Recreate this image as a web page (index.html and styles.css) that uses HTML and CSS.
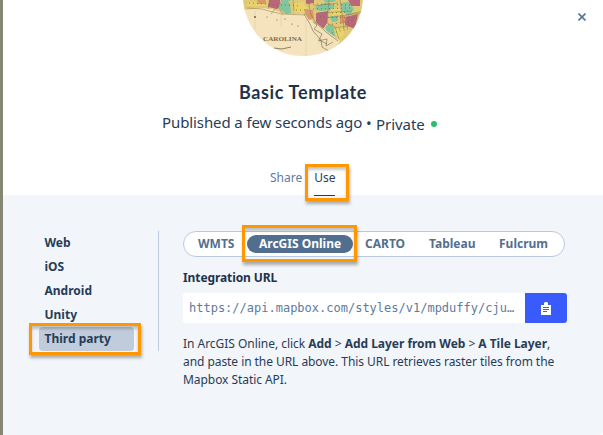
FILE: index.html
```html
<!DOCTYPE html>
<html lang="en">
<head>
<meta charset="utf-8">
<title>Basic Template</title>
<link rel="stylesheet" href="styles.css">
</head>
<body>
<main class="modal">
  <header class="top">
    <svg class="map" viewBox="0 0 120 56" width="120" height="56">
      <defs><clipPath id="disc"><circle cx="60" cy="-4" r="60"/></clipPath></defs>
      <g clip-path="url(#disc)">
        <path fill="#f4e3bd" d="M0 0h120v56H0z"/>
        <path fill="#dfc978" d="M0 0h120v46H96L76 27 61 14 42 14 29 9 20 8 0 10z"/>
        <path fill="#b8687b" d="M26 0l11 0 1 6-4 3-9-2zM73 13l12-2-1 12-4 6-7-7zM102 17l13-3-3 15-10-4zM63 0h8l0 3-8 1zM105 0h12v6l-9 0z"/>
        <path fill="#80c59f" d="M36 5l5-4 6 2 1 10-5 1-6-5zM74 6l10-4 8 4-3 4-12 1-5-2zM83 26l6-1 4 7 2 5-7-2-5-3zM98 3l7-1 6 7-5 7-7-5zM87 16l8-1 0 6-6 1zM38 0h10l-3 2-7 0zM80 0h13l-2 2-8 0z"/>
        <path fill="#ebd26b" d="M51 4l9-2 4 8-6 4-7-2zM88 9l9 0 2 6-10 1zM91 29l9-2 1 7-5 5-4-4zM5 2h18l1 4H4z"/>
        <path fill="#d99868" d="M62 9l8 1 1 8-5 2-4-6zM97 15l6 1-1 7-5 1zM14 0h9v4h-8z"/>
        <path fill="#f2e1ba" d="M73 23l24 18-8 12-13-4-6-15z"/>
        <path fill="none" stroke="#76694c" stroke-width=".6" d="M61 14l6 10 3 7 8 9 1 7 7 4M70 22l4 3-3 4 8 5-3 6 8 4M73 23l10 9 12 9M75 41l9-2-1 7 7-4"/>
        <path fill="none" stroke="#8b7848" stroke-width=".5" d="M4 8l15 1 7 2 13 3 23 1M65 0l3 15 5 8M50 0l1 11M71 6l24-3M86 0l-2 23 8 4 4 12M97 0l4 28M103 15l17-4M84 18l34-5M91 28l20-3M75 13l34-2M27 0l-2 9M33 8l-5 6M36 8l4 7"/>
        <path fill="none" stroke="#77643e" stroke-width=".8" stroke-dasharray="1 3" d="M66 4l42 1M70 9l37-1M77 17l38 1M85 25l27-5M89 33l16-4M6 3l51 3M53 10h10M89 13l15-1M96 29l10-2"/>
        <path fill="none" stroke="#ddd0aa" stroke-width=".6" d="M12 10v20M38 14v13M63 15v41"/>
        <path fill="none" stroke="#665437" stroke-width=".7" d="M31 48l8 1 9-2"/>
        <g fill="#705b3b"><circle cx="12" cy="17" r="1"/><circle cx="24" cy="17" r=".6"/><circle cx="34" cy="20" r=".6"/><circle cx="42" cy="19" r=".6"/><circle cx="49" cy="24" r=".6"/><circle cx="55" cy="26" r=".6"/></g>
        <text x="20" y="41" class="map-label" textLength="39" lengthAdjust="spacingAndGlyphs">CAROLINA</text>
      </g>
    </svg>
    <svg class="close" viewBox="0 0 8 8" width="8" height="8"><path d="M.5.5l7 7M7.5.5l-7 7"/></svg>
    <h1>Basic Template</h1>
    <p class="status"><span class="published">Published a few seconds ago</span><span class="bullet">•</span><span class="private">Private</span><i class="dot"></i></p>
    <nav class="views"><a>Share</a><a class="current">Use<span class="mark mark-use"></span></a></nav>
  </header>
  <section class="panel">
    <nav class="platforms">
      <a>Web</a><a>iOS</a><a>Android</a><a>Unity</a>
      <a class="selected">Third party<span class="mark mark-party"></span></a>
    </nav>
    <div class="content">
      <div class="tabs">
        <a class="wmts">WMTS</a><a class="arcgis">ArcGIS Online<span class="mark mark-arcgis"></span></a><a class="carto">CARTO</a><a class="tableau">Tableau</a><a class="fulcrum">Fulcrum</a>
      </div>
      <h2>Integration URL</h2>
      <div class="url">
        <div class="value">https://api.mapbox.com/styles/v1/mpduffy/cju…</div>
        <button aria-label="Copy"><svg viewBox="0 0 10 13" width="10" height="13"><path fill="#fff" d="M0 3h3V1l1-1h2l1 1v2h3v10H0z"/><path class="lines" d="M2 5.5h6M2 7.5h6M2 9.5h4"/></svg></button>
      </div>
      <p class="help"><span class="line-a">In ArcGIS Online, click <b>Add</b> &gt; <b>Add Layer from Web</b> &gt; <b>A Tile Layer</b>,</span><br><span class="line-b">and paste in the URL above. This URL retrieves raster tiles from the</span><br><span class="line-b">Mapbox Static API.</span></p>
    </div>
  </section>
</main>
</body>
</html>
```

FILE: styles.css
```css
* { box-sizing: border-box; }
body { margin: 0; font-family: "Noto Sans", sans-serif; font-size: 12px; color: #273d56; overflow: hidden; }
.modal { height: 435px; border-left: 3px solid #858674; background: #f2f5fa; border-bottom-right-radius: 3px; }
.top { position: relative; height: 195px; background: #fff; display: flex; flex-direction: column; align-items: center; }
.map { display: block; flex: none; }
.map-label { font: bold 6.5px "Liberation Serif", serif; fill: #7d6b4a; }
.close { position: absolute; right: 17px; top: 13px; }
.close path { stroke: #56739a; stroke-width: 1.6; fill: none; }
h1 { margin: 24px 0 0; font: bold 18px/24px Lato, sans-serif; letter-spacing: .65px; color: #1f334a; }
.status { display: flex; align-items: center; margin: 6px 0 0; height: 24px; font-size: 15px; line-height: 24px; white-space: nowrap; width: 282px; }
.published { width: 201px; letter-spacing: -.1px; }
.bullet { width: 13px; padding-left: 3px; padding-top: 2px; }
.private { width: 54px; padding-top: 3px; letter-spacing: -.05px; }
.dot { width: 6px; height: 6px; border-radius: 50%; background: #2dbe6c; margin: 3px 0 0 1px; }
.views { display: flex; gap: 12px; margin-top: 34px; width: 66px; line-height: 20px; }
.views a { color: #607b9c; }
.views .current { position: relative; width: 21px; height: 28px; color: #273d56; border-bottom: 1px solid #273d56; }
.mark { position: absolute; border: 3px solid #ff9800; box-shadow: 1px 3px 3px rgba(0,0,0,.3), inset 0 3px 3px rgba(0,0,0,.22); z-index: 2; }
.mark-use { left: -9px; top: -4px; width: 44px; height: 37px; }
.panel { display: flex; padding: 36px 36px 0; }
.platforms { width: 120px; height: 120px; border-right: 1px solid #bccbde; flex: none; }
.platforms a { position: relative; display: block; width: 95px; height: 24px; padding-left: 5.5px; line-height: 23px; font-weight: bold; border-radius: 4px; }
.platforms .selected { background: #c0ccdc; }
.mark-party { left: -10px; top: -4px; width: 112px; height: 32px; }
.content { margin-left: 24px; width: 390px; flex: none; }
.tabs { display: flex; align-items: center; width: 382px; height: 26px; padding-left: 2px; border: 1px solid #b9c9dd; border-radius: 13px; background: #fff; color: #526f91; font-weight: bold; line-height: 18px; white-space: nowrap; }
.tabs a { position: relative; padding-left: 12px; height: 18px; }
.wmts { width: 61px; }
.tabs .arcgis { width: 106px; background: #526e8e; color: #fff; border-radius: 9px; }
.mark-arcgis { left: -5px; top: -10px; width: 115px; height: 37px; }
.carto { width: 64px; }
.tableau { width: 70px; }
h2 { margin: 11px 0 0; font-size: 12px; line-height: 20px; letter-spacing: -.1px; color: #1f334a; }
.url { display: flex; width: 384px; height: 30px; margin-top: 5px; border-radius: 3px; overflow: hidden; }
.value { flex: 1; background: #fff; color: #607b9c; padding-left: 6px; font: 12px/30px "DejaVu Sans Mono", monospace; }
button { display: flex; align-items: center; justify-content: center; width: 42px; border: 0; padding: 1px 0 0; background: #395bfb; }
.lines { stroke: #395bfb; stroke-width: 1; }
.help { margin: 12px 0 0; line-height: 18px; white-space: nowrap; }
.line-a { letter-spacing: -.03px; }
.line-b { letter-spacing: -.06px; }
```
